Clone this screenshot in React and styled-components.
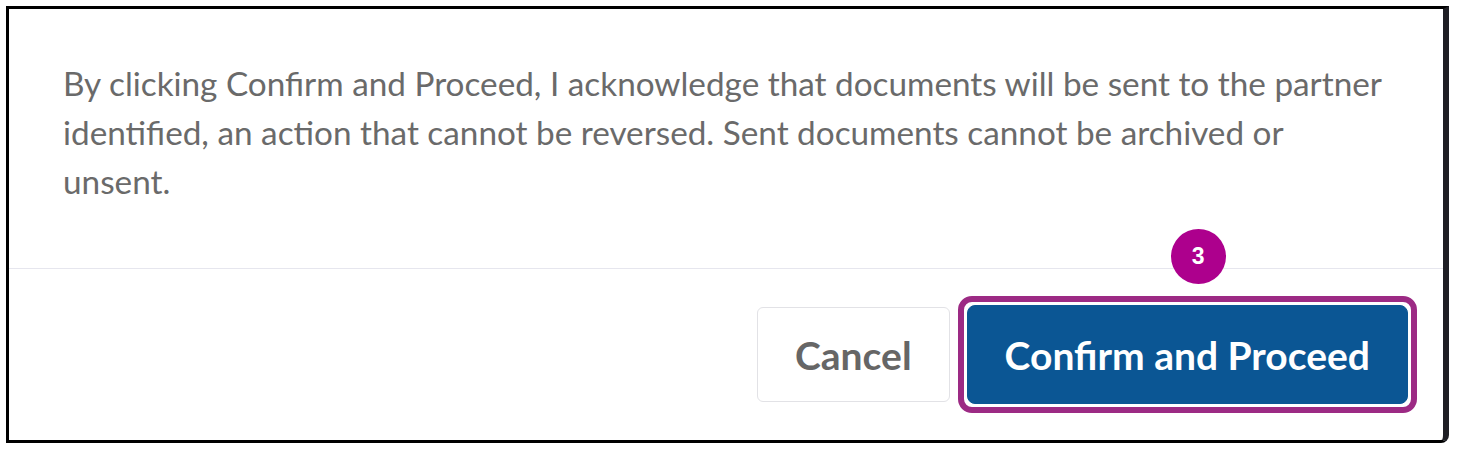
import React from "react";
import styled, { createGlobalStyle } from "styled-components";

const GlobalStyle = createGlobalStyle`
    html, body {
        margin: 0;
        padding: 0;
        background: #ffffff;
    }
    body {
        font-family: Lato, "Open Sans", sans-serif;
    }
`;

const Frame = styled.div`
    box-sizing: border-box;
    margin: 6px 0 0 6px;
    width: 1443px;
    height: 437px;
    border: 3px solid #000;
    border-right: 6px solid #1e1e24;
    border-bottom-right-radius: 8px;
    display: flex;
    flex-direction: column;
    background: #fff;
`;

const Body = styled.div`
    padding: 50px 55px 62px 54px;
    border-bottom: 1px solid #e6e6ee;
`;

const Message = styled.p`
    margin: 0;
    font-size: 33.3px;
    line-height: 49px;
    color: #6a6a6a;
`;

const Footer = styled.div`
    flex: 1;
    display: flex;
    justify-content: flex-end;
    align-items: center;
    gap: 8px;
    padding-right: 26px;
`;

const Button = styled.button`
    box-sizing: border-box;
    height: ${p => p.$primary ? 99 : 95}px;
    padding: 0 37px;
    border-radius: ${p => p.$primary ? 8 : 6}px;
    border: 1px solid ${p => p.$primary ? "#0b5694" : "#e2e2e6"};
    background: ${p => p.$primary ? "#0b5694" : "#fff"};
    color: ${p => p.$primary ? "#fff" : "#666"};
    font-family: Lato, "Open Sans", sans-serif;
    font-weight: 700;
    font-size: 39px;
    cursor: pointer;
`;

const Highlight = styled.span`
    position: relative;
    display: inline-flex;
    padding: 3px;
    border: 6px solid #9c2a84;
    border-radius: 14px;
    background: #fff;
`;

const StepBadge = styled.span`
    position: absolute;
    left: 207px;
    top: -73px;
    width: 55px;
    height: 55px;
    border-radius: 50%;
    background: #ad008d;
    color: #fff;
    display: flex;
    align-items: center;
    justify-content: center;
    font-family: "Liberation Sans", Arial, sans-serif;
    font-weight: 700;
    font-size: 23px;
`;

export default function App() {
    return (
        <>
            <GlobalStyle />
            <Frame>
                <Body>
                    <Message>
                        By clicking Confirm and Proceed, I acknowledge that documents will be sent to the partner identified, an action that cannot be reversed. Sent documents cannot be archived or unsent.
                    </Message>
                </Body>
                <Footer>
                    <Button>Cancel</Button>
                    <Highlight>
                        <StepBadge>3</StepBadge>
                        <Button $primary>Confirm and Proceed</Button>
                    </Highlight>
                </Footer>
            </Frame>
        </>
    );
}
